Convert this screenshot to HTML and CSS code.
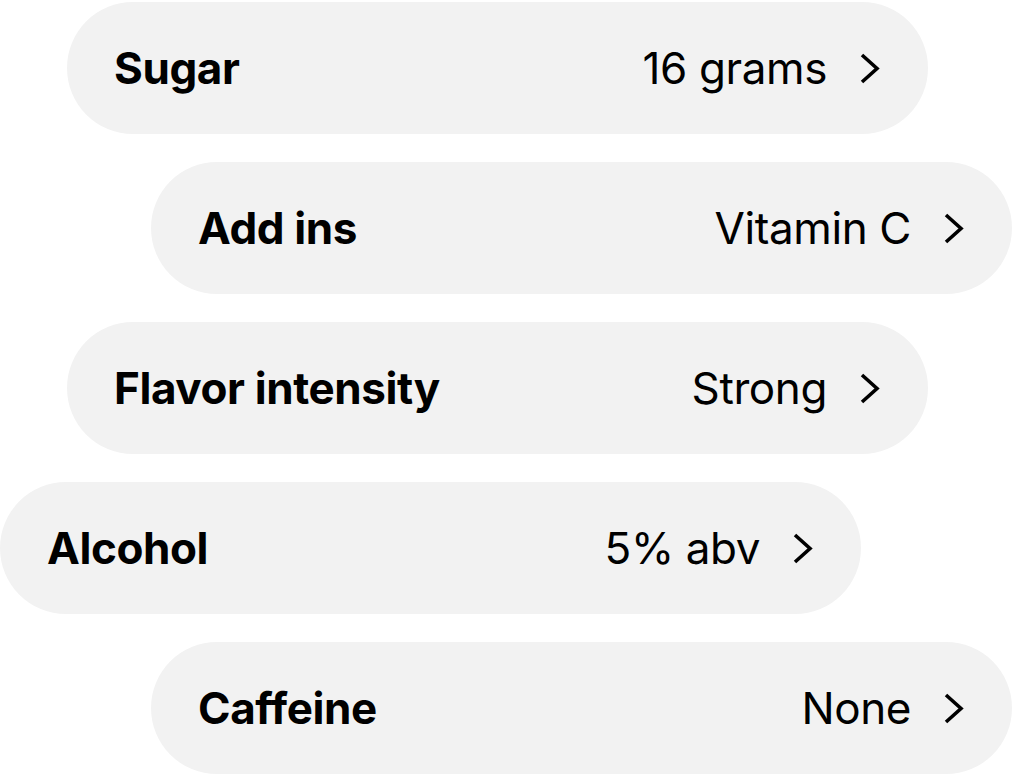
FILE: index.html
```html
<!DOCTYPE html>
<html lang="en">
<head>
  <meta charset="UTF-8" />
  <title>Drink options</title>
  <link rel="stylesheet" href="styles.css">
</head>
<body>
  <div class="options">
    <div class="option indent-1">
      <span class="option-label">Sugar</span>
      <span class="option-value">16 grams</span>
      <svg class="chevron" viewBox="0 0 20 31"><path d="M2 2 L17 15.5 L2 29" /></svg>
    </div>
    <div class="option indent-2">
      <span class="option-label">Add ins</span>
      <span class="option-value">Vitamin C</span>
      <svg class="chevron" viewBox="0 0 20 31"><path d="M2 2 L17 15.5 L2 29" /></svg>
    </div>
    <div class="option indent-1">
      <span class="option-label">Flavor intensity</span>
      <span class="option-value">Strong</span>
      <svg class="chevron" viewBox="0 0 20 31"><path d="M2 2 L17 15.5 L2 29" /></svg>
    </div>
    <div class="option">
      <span class="option-label">Alcohol</span>
      <span class="option-value">5% abv</span>
      <svg class="chevron" viewBox="0 0 20 31"><path d="M2 2 L17 15.5 L2 29" /></svg>
    </div>
    <div class="option indent-2">
      <span class="option-label">Caffeine</span>
      <span class="option-value">None</span>
      <svg class="chevron" viewBox="0 0 20 31"><path d="M2 2 L17 15.5 L2 29" /></svg>
    </div>
  </div>
</body>
</html>
```

FILE: styles.css
```css
body {
  margin: 0;
  font-family: Inter, 'Liberation Sans', sans-serif;
  background: #ffffff;
  color: #000000;
}

.options {
  display: flex;
  flex-direction: column;
  gap: 28px;
  padding-top: 2px;
}

.option {
  display: flex;
  align-items: center;
  width: 861px;
  height: 132px;
  box-sizing: border-box;
  padding: 0 48px 0 47px;
  background-color: #f2f2f2;
  border-radius: 66px;
  font-size: 44px;
  letter-spacing: -0.4px;
}

.indent-1 {
  margin-left: 67px;
}

.indent-2 {
  margin-left: 151px;
}

.option-label {
  font-weight: 700;
  flex: 1;
}

.option-value {
  font-weight: 400;
  margin-right: 33px;
}

.chevron {
  width: 20px;
  height: 31px;
  fill: none;
  stroke: #000000;
  stroke-width: 3.6;
}
```
